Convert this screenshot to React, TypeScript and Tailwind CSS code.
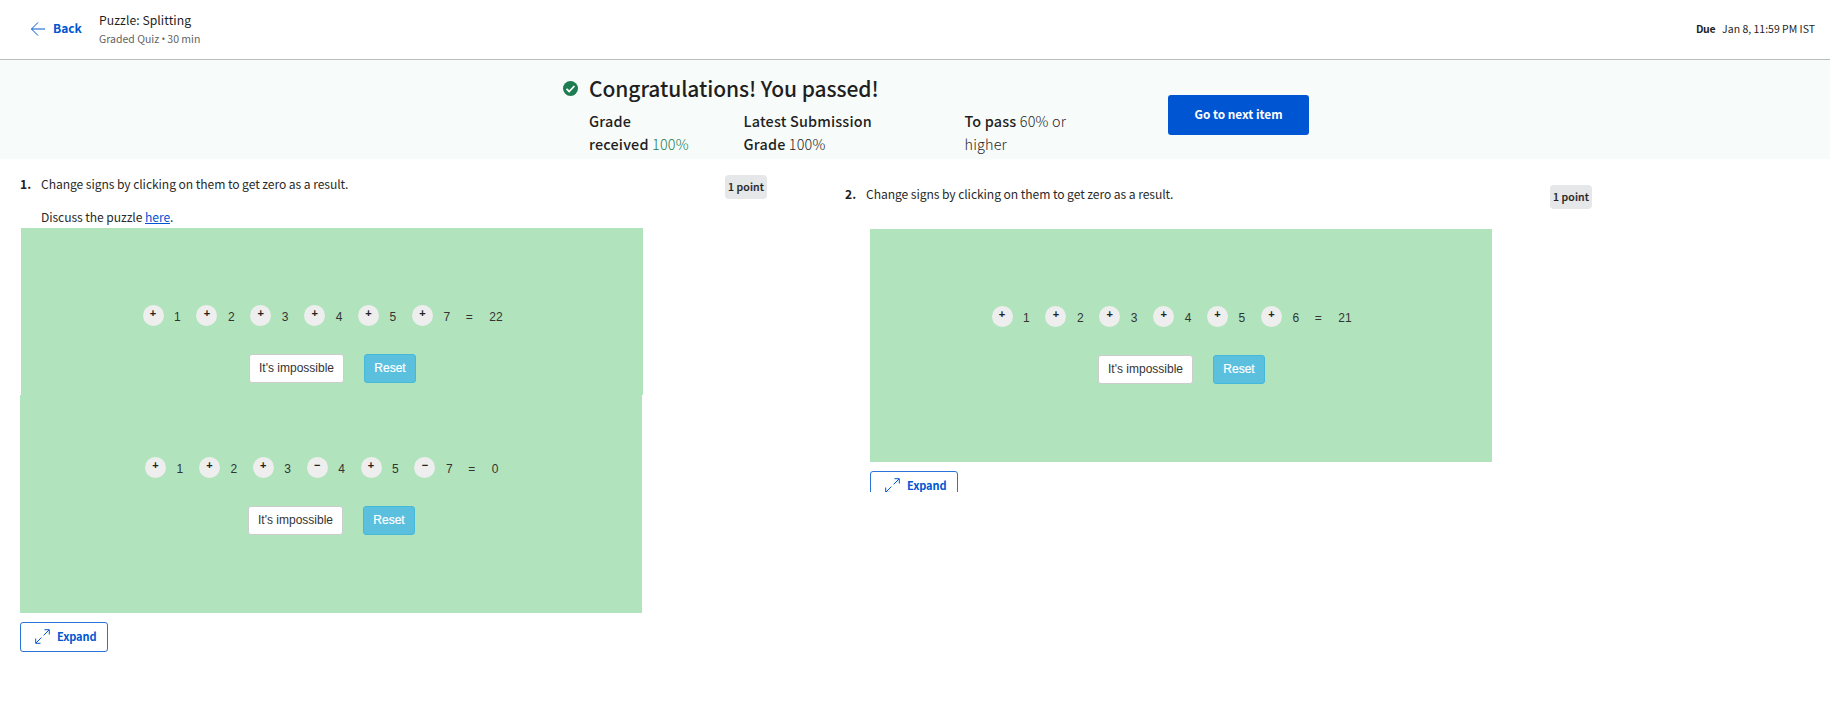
import type { ReactNode } from "react";

function ExpandIcon() {
  return (
    <svg width="15" height="15" viewBox="0 0 15 15" fill="none" stroke="#0056d2" strokeWidth="1" className="shrink-0">
      <path d="M9.5 0.7h4.8v4.8M14 1L8.6 6.4M5.5 14.3H0.7V9.5M1 14l5.4-5.4" />
    </svg>
  );
}

function ExpandButton() {
  return (
    <button className="flex h-[30px] w-[88px] shrink-0 items-center rounded-[3px] border border-[#2a73d9] bg-white pb-px pl-[14px] text-[#0056d2]">
      <ExpandIcon />
      <span className="ml-[7px] pb-px text-[11px] leading-4 font-bold whitespace-nowrap tracking-[-0.1px]">Expand</span>
    </button>
  );
}

function Equation({ signs, numbers, result }: { signs: string; numbers: number[]; result: number }) {
  return (
    <div className="flex h-[21px] text-[12px] leading-[21px] text-[#333]">
      {numbers.map((n, i) => (
        <div key={n} className="flex w-[53.9px] shrink-0">
          <span className="flex size-[21px] justify-center rounded-full bg-[#eeeeee] text-[11px] leading-[17px] font-bold text-[#222]">
            {signs[i]}
          </span>
          <span className="ml-[10.5px] pt-[2px]">{n}</span>
        </div>
      ))}
      <span className="w-[23.5px] shrink-0 pt-[2px]">=</span>
      <span className="pt-[2px]">{result}</span>
    </div>
  );
}

function PuzzleButtons() {
  return (
    <div className="flex gap-[20px] text-[12px] leading-[26px]">
      <button className="h-[29px] w-[95px] shrink-0 rounded-[3px] border border-[#ccc] bg-white pb-px whitespace-nowrap text-[#333]">
        It's impossible
      </button>
      <button className="h-[29px] w-[52px] shrink-0 rounded-[3px] border border-[#46b8da] bg-[#5bc0de] pb-px text-white [-webkit-text-stroke:0.2px_white]">
        Reset
      </button>
    </div>
  );
}

function Points() {
  return (
    <div className="h-6 w-[42px] shrink-0 rounded-[4px] bg-[#e5e7e8] text-center text-[10.5px] leading-6 font-medium whitespace-nowrap text-[#1f1f1f]">
      <span className="tracking-[0.1px] [-webkit-text-stroke:0.2px_#1f1f1f]">1 point</span>
    </div>
  );
}

function Metric({ className, children }: { className: string; children: ReactNode }) {
  return <div className={className}>{children}</div>;
}

export default function App() {
  return (
    <div className="h-[724px] w-[1842px] overflow-hidden bg-white font-['Noto_Sans_CJK_SC','Noto_Sans',sans-serif] text-[#1f1f1f]">
      <header className="flex h-[60px] w-[1830px] border-b border-[#bbbbbb]">
        <div className="flex h-[58px] items-center pl-[31px] text-[#0056d2]">
          <svg width="15" height="14" viewBox="0 0 15 14" fill="none" stroke="#0056d2" strokeWidth="1">
            <path d="M7 0.5L0.5 7L7 13.5M0.5 7H14" />
          </svg>
          <span className="ml-[7px] w-[46px] pb-[2px] text-[12px] font-bold">Back</span>
        </div>
        <div className="pt-[11px]">
          <div className="text-[12.2px] leading-[18px] tracking-[0.05px]">Puzzle: Splitting</div>
          <div className="pt-px text-[10.5px] leading-[18px] whitespace-nowrap text-[#636363]">
            Graded Quiz <span className="font-['Open_Sans',sans-serif] text-[10px] -tracking-[0.3px]">•</span> 30 min
          </div>
        </div>
        <div className="ml-auto pt-[20px] pr-[15px] text-[10.5px] leading-[18px] whitespace-nowrap">
          <span className="mr-[7px] font-bold tracking-[-0.4px]">Due</span>Jan 8, 11:59 PM IST
        </div>
      </header>

      <section className="flex h-[99px] w-[1830px] bg-[#f7fbfa] pl-[563px]">
        <svg width="15" height="15" viewBox="0 0 15 15" className="mt-[21px] shrink-0">
          <circle cx="7.5" cy="7.5" r="7.5" fill="#1d7c50" />
          <path d="M3.5 7.9l2.7 2.6 5.2-5.5" fill="none" stroke="#fff" strokeWidth="1.8" />
        </svg>
        <div className="ml-[11px] w-[579px] shrink-0 pt-[13px]">
          <h1 className="text-[21px] leading-[30px] font-medium tracking-[-0.08px]">Congratulations! You passed!</h1>
          <div className="mt-[6px] flex text-[14.4px] leading-[23px] font-light whitespace-nowrap tracking-[0.18px]">
            <Metric className="w-[154.5px]">
              <span className="font-medium">Grade<br />received</span> <span className="text-[#1d7c50]">100%</span>
            </Metric>
            <Metric className="w-[221px]">
              <span className="font-medium">Latest Submission<br />Grade</span> 100%
            </Metric>
            <Metric className="w-[140px]">
              <span className="font-medium">To pass</span> 60% or<br />higher
            </Metric>
          </div>
        </div>
        <button className="mt-[35px] h-10 w-[141px] shrink-0 rounded-[3px] bg-[#0056d2] pb-[2px] text-[11.8px] font-bold text-white">
          Go to next item
        </button>
      </section>

      <main className="flex">
        <section className="w-[825px] shrink-0 pl-5">
          <div className="flex h-[69px] pt-[16px] text-[12.1px] leading-[20px]">
            <span className="-mt-px w-[21px] font-bold">1.</span>
            <div className="-mt-px w-[684px] tracking-[-0.07px] text-[#2a2a2a]">
              <p>Change signs by clicking on them to get zero as a result.</p>
              <p className="mt-[13px]">
                Discuss the puzzle <a className="text-[#0056d2] underline">here</a>.
              </p>
            </div>
            <Points />
          </div>
          <div className="font-['Liberation_Sans',sans-serif]">
            <div className="ml-px h-[167px] w-[622px] bg-[#b1e4bd] pt-[77px]">
              <div className="pl-[121.5px]"><Equation signs="++++++" numbers={[1, 2, 3, 4, 5, 7]} result={22} /></div>
              <div className="mt-[28px] pl-[228px]"><PuzzleButtons /></div>
            </div>
            <div className="h-[218px] w-[622px] bg-[#b1e4bd] pt-[62px]">
              <div className="pl-[125px]"><Equation signs="+++−+−" numbers={[1, 2, 3, 4, 5, 7]} result={0} /></div>
              <div className="mt-[28px] pl-[228px]"><PuzzleButtons /></div>
            </div>
          </div>
          <div className="mt-[9px]"><ExpandButton /></div>
        </section>

        <section className="w-[767px] shrink-0 pl-5">
          <div className="flex h-[70px] pt-[26px] text-[12.1px] leading-[20px]">
            <span className="-mt-px w-[21px] font-bold">2.</span>
            <p className="-mt-px w-[684px] tracking-[-0.07px] text-[#2a2a2a]">Change signs by clicking on them to get zero as a result.</p>
            <Points />
          </div>
          <div className="ml-[25px] h-[233px] w-[622px] bg-[#b1e4bd] pt-[77px] font-['Liberation_Sans',sans-serif]">
            <div className="pl-[121.5px]"><Equation signs="++++++" numbers={[1, 2, 3, 4, 5, 6]} result={21} /></div>
            <div className="mt-[28px] pl-[228px]"><PuzzleButtons /></div>
          </div>
          <div className="mt-[9px] ml-[25px] h-[21px] overflow-hidden"><ExpandButton /></div>
        </section>
      </main>
    </div>
  );
}
